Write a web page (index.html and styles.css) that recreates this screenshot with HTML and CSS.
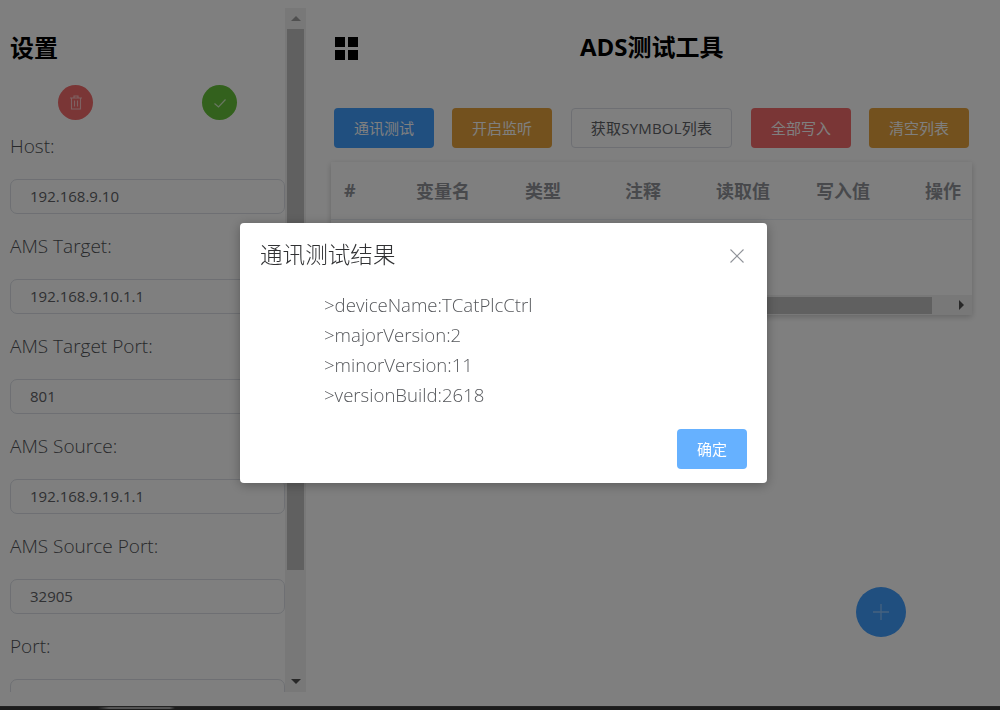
FILE: index.html
```html
<!DOCTYPE html>
<html lang="zh-CN">
<head>
<meta charset="utf-8">
<title>ADS测试工具</title>
<link rel="stylesheet" href="styles.css">
</head>
<body>
<div class="app">
  <aside class="sidebar">
    <div class="side-content">
      <h2 class="side-title">设置</h2>
      <div class="side-actions">
        <button class="round red"><svg width="14" height="15" viewBox="0 0 14 15"><path d="M1 3h12M5 3V1h4v2M2.500 3v11h9V3M5.500 5.500v6M8.500 5.500v6" fill="none" stroke="#fff" stroke-opacity=".6" stroke-width="1.100"/></svg></button>
        <button class="round green"><svg width="14" height="14" viewBox="0 0 14 14"><path d="M1.500 7.500 5.500 11 12.500 3.500" fill="none" stroke="#fff" stroke-opacity=".7" stroke-width="1.200"/></svg></button>
      </div>
      <div class="field"><label>Host:</label><div class="input">192.168.9.10</div></div>
      <div class="field"><label>AMS Target:</label><div class="input">192.168.9.10.1.1</div></div>
      <div class="field"><label>AMS Target Port:</label><div class="input">801</div></div>
      <div class="field"><label>AMS Source:</label><div class="input">192.168.9.19.1.1</div></div>
      <div class="field"><label>AMS Source Port:</label><div class="input">32905</div></div>
      <div class="field"><label>Port:</label><div class="input">48898</div></div>
    </div>
    <div class="vscroll">
      <div class="arrow-box"><span class="tri up"></span></div>
      <div class="vthumb"></div>
      <div class="vrest"></div>
      <div class="arrow-box"><span class="tri down"></span></div>
    </div>
  </aside>
  <main class="main">
    <header class="topbar">
      <svg class="grid-icon" width="23" height="23" viewBox="0 0 23 23"><path d="M0 0h10v10H0zM13 0h10v10H13zM0 13h10v10H0zM13 13h10v10H13z"/></svg>
      <h1 class="page-title">ADS测试工具</h1>
    </header>
    <div class="toolbar">
      <button class="btn primary">通讯测试</button>
      <button class="btn warning">开启监听</button>
      <button class="btn plain">获取SYMBOL列表</button>
      <button class="btn danger">全部写入</button>
      <button class="btn warning">清空列表</button>
    </div>
    <section class="table">
      <div class="thead">
        <span class="hash">#</span><span>变量名</span><span>类型</span><span>注释</span><span>读取值</span><span>写入值</span><span>操作</span>
      </div>
      <div class="tbody"></div>
      <div class="hscroll">
        <div class="hthumb"></div>
        <span class="tri right"></span>
      </div>
    </section>
  </main>
</div>
<button class="fab"><svg width="16" height="16" viewBox="0 0 16 16"><path d="M8 0v16M0 8h16" stroke="#fff" stroke-opacity=".4" stroke-width="1.300"/></svg></button>
<div class="overlay"></div>
<div class="dialog">
  <div class="dialog-head">
    <span class="dialog-title">通讯测试结果</span>
    <svg class="close" width="14" height="14" viewBox="0 0 14 14"><path d="M.5.5l13 13M13.500.5l-13 13" stroke="#909399" stroke-width="1.100"/></svg>
  </div>
  <div class="dialog-body">
    <p>&gt;deviceName:TCatPlcCtrl</p>
    <p>&gt;majorVersion:2</p>
    <p>&gt;minorVersion:11</p>
    <p>&gt;versionBuild:2618</p>
  </div>
  <div class="dialog-foot"><button class="btn confirm">确定</button></div>
</div>
<div class="taskbar"><span class="glow"></span></div>
</body>
</html>
```
FILE: styles.css
```css
* { box-sizing: border-box; }
html, body { margin: 0; height: 710px; overflow: hidden; background: #fff; }
body { font-family: "Open Sans", "Noto Sans CJK SC", sans-serif; color: #606266; }
button { font-family: inherit; margin: 0; padding: 0; cursor: pointer; }

.app { display: flex; height: 692px; margin-top: 8px; }
.sidebar { width: 306px; height: 684px; display: flex; flex: none; }
.side-content { width: 285px; height: 684px; overflow: hidden; padding-left: 10px; flex: none; }
.side-title { margin: 26px 0 0; height: 28px; font-size: 24px; line-height: 28px; font-weight: 700; color: #000; }
.side-actions { display: flex; gap: 109px; padding-left: 48px; margin-top: 23px; }
.round { width: 35px; height: 35px; border-radius: 50%; border: 0; display: flex; align-items: center; justify-content: center; }
.red { background: #f56c6c; }
.green { background: #67c23a; }
.field { height: 100px; }
.side-actions + .field { margin-top: 7px; }
.field label { display: block; height: 52px; padding-top: 6px; font-size: 19px; line-height: 27px; font-weight: 300; color: #505256; }
.input { height: 35px; width: 275px; border: 1px solid #dcdfe6; border-radius: 7px; padding-left: 19px; font-size: 15px; line-height: 32px; color: #606266; }

.vscroll { width: 21px; height: 684px; background: #f1f1f1; display: flex; flex-direction: column; flex: none; }
.arrow-box { height: 21px; flex: none; display: flex; align-items: center; justify-content: center; }
.vthumb { height: 541px; width: 17px; margin: 0 2px; background: #c1c1c1; flex: none; }
.vrest { flex: 1; }
.tri { display: block; width: 0; height: 0; border-style: solid; border-color: transparent; }
.tri.up { border-width: 0 5px 5px; border-bottom-color: #a0a0a0; }
.tri.down { border-width: 5px 5px 0; border-top-color: #505050; }
.tri.right { border-width: 5px 0 5px 5px; border-left-color: #505050; }

.main { flex: 1; min-width: 0; padding-left: 25px; }
.topbar { position: relative; height: 54px; display: flex; align-items: flex-start; padding: 29px 0 0 4px; }
.grid-icon { flex: none; }
.page-title { position: absolute; left: 249px; top: 24px; margin: 0; font-size: 24px; line-height: 30px; font-weight: 700; color: #000; }
.toolbar { display: flex; gap: 18px; margin-top: 46px; padding-left: 3px; }
.btn { height: 40px; width: 100px; padding-bottom: 2px; border-radius: 4px; border: 1px solid transparent; font-size: 15px; color: #fff; flex: none; }
.primary { background: #409eff; }
.warning { background: #e6a23c; }
.danger { background: #f56c6c; }
.plain { background: #fff; border-color: #dcdfe6; color: #606266; width: 161px; margin: 0 1px; letter-spacing: .2px; }
.table { width: 641px; height: 153px; margin-top: 14px; display: flex; flex-direction: column; box-shadow: 0 2px 6px rgba(0,0,0,.2); background: #fff; }
.thead { height: 58px; padding-bottom: 2px; display: grid; grid-template-columns: 62px repeat(6, 100px); align-items: center; text-align: center; border-bottom: 1px solid #ebeef5; font-size: 18px; font-weight: 700; color: #909399; flex: none; }
.thead .hash { text-align: left; padding-left: 13px; }
.tbody { flex: 1; }
.hscroll { height: 20px; background: #f1f1f1; position: relative; display: flex; align-items: center; justify-content: flex-end; padding-right: 8px; flex: none; }
.hthumb { position: absolute; left: 0; top: 2px; width: 601px; height: 17px; background: #c1c1c1; }

.fab { position: fixed; left: 856px; top: 587px; width: 50px; height: 50px; border-radius: 50%; border: 0; background: #409eff; display: flex; align-items: center; justify-content: center; }
.overlay { position: fixed; inset: 0; background: rgba(0,0,0,.5); }
.dialog { position: fixed; left: 240px; top: 223px; width: 527px; height: 260px; background: #fff; border-radius: 4px; box-shadow: 0 2px 12px rgba(0,0,0,.3); display: flex; flex-direction: column; }
.dialog-head { height: 67px; flex: none; display: flex; align-items: flex-start; justify-content: space-between; padding: 14px 23px 0 20px; }
.dialog-title { font-size: 22.6px; line-height: 36px; color: #303133; font-weight: 300; }
.close { margin-top: 12px; }
.dialog-body { padding-left: 84px; height: 120px; flex: none; font-size: 18.6px; font-weight: 300; color: #55575b; }
.dialog-body p { margin: 0; height: 30px; line-height: 30px; }
.dialog-foot { display: flex; justify-content: flex-end; padding: 19px 20px 0; }
.confirm { width: 70px; background: #66b1ff; }
.taskbar { position: fixed; left: 0; right: 0; top: 706px; height: 4px; background: #1c1c1c; border-top: 1px solid #222; }
.glow { display: block; width: 110px; height: 2px; margin-left: 65px; background: radial-gradient(ellipse at 18% center, #b8a070, transparent 22%), linear-gradient(90deg, transparent 30%, #555 40%, #555 95%, transparent); }
```
